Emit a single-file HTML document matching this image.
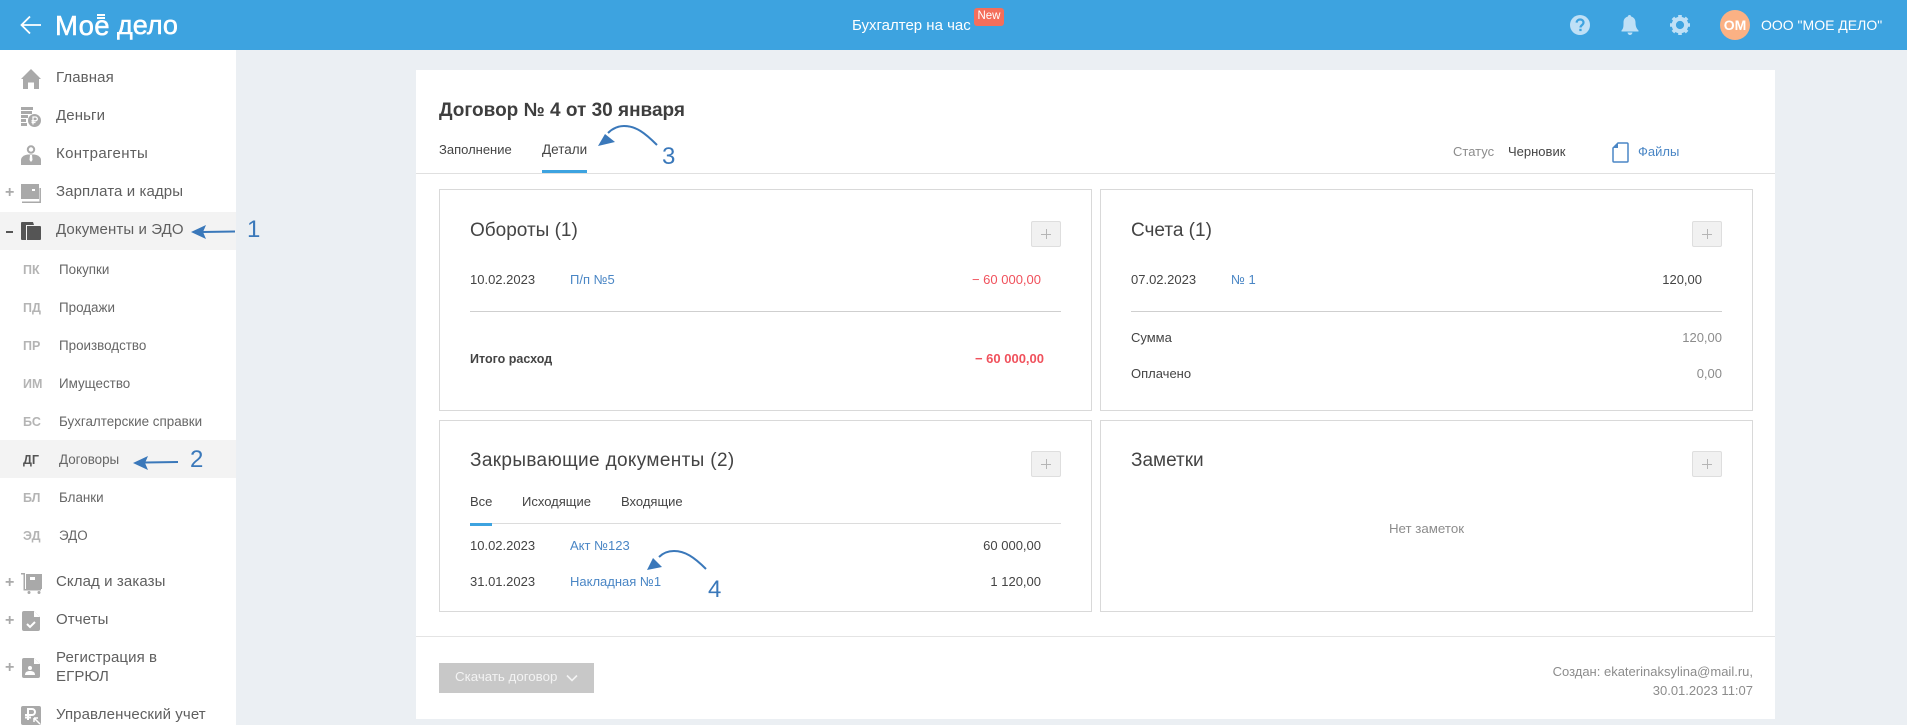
<!DOCTYPE html>
<html lang="ru"><head><meta charset="utf-8"><title>Договор</title>
<style>
*{box-sizing:border-box}
html,body{margin:0;padding:0;width:1907px;height:725px;overflow:hidden;background:#ebeff3;font-family:"Liberation Sans",Arial,sans-serif;color:#444}
.t{position:absolute;white-space:nowrap;line-height:20px;font-size:13px}
.r{text-align:right}
.a{position:absolute}
.m{font-size:15px;color:#5f5f5f;letter-spacing:.1px}
.s{font-size:13.4px;color:#666}
.k{font-size:12.5px;font-weight:bold;color:#b4b4b4}
.p{font-size:16px;color:#aaa;font-weight:bold}
.b{position:absolute;border:1px solid #d9d9d9;background:#fff}
.h{font-size:19px;color:#444;line-height:26px}
.l{color:#4a86c5}
.pb{position:absolute;width:30px;height:26px;background:#f1f1f1;border:1px solid #dedede;border-radius:2px}
.pb:before{content:"";position:absolute;left:9px;top:12px;width:10px;height:1px;background:#b5b5b5}
.pb:after{content:"";position:absolute;left:14px;top:7px;width:1px;height:10px;background:#b5b5b5}
.ln{position:absolute;height:1px;background:#cfcfcf}
.d{font-size:24px;line-height:30px;color:#3a78ba}
</style></head><body>

<div class="a" style="left:0;top:0;width:1907px;height:50px;background:#3da3e0"></div>
<svg class="a" style="left:20px;top:14px" width="22" height="22" viewBox="0 0 22 22" fill="none" stroke="#fff" stroke-width="1.800"><path d="M21 11H1.500M10 2.500L1.500 11l8.500 8.500"/></svg>
<div class="t" style="left:55px;top:10px;font-size:27.500px;line-height:32px;color:#fff;-webkit-text-stroke:.5px #fff;letter-spacing:.4px">Мое</div>
<div class="a" style="left:97px;top:14px;width:8px;height:2px;background:#fff"></div>
<div class="a" style="left:97px;top:17px;width:8px;height:2px;background:#fff"></div>
<div class="t" style="left:117px;top:9px;font-size:27px;line-height:32px;color:#fff;-webkit-text-stroke:.5px #fff;letter-spacing:0">дело</div>
<div class="t" style="left:852px;top:16px;font-size:15px;color:#fff">Бухгалтер на час</div>
<div class="a" style="left:974px;top:8px;width:30px;height:18px;background:#f46e5b;border-radius:3px;color:#fff;font-size:11.5px;line-height:17px;text-align:center">New</div>
<svg class="a" style="left:1570px;top:15px" width="20" height="20" viewBox="0 0 20 20"><circle cx="10" cy="10" r="10" fill="#bfe0f6"/><path d="M6.600 7.600C6.800 5.600 8.200 4.500 10.100 4.500c2 0 3.400 1.200 3.400 3 0 2.600-3 2.600-3 5" fill="none" stroke="#3da3e0" stroke-width="2.200"/><rect x="9.300" y="13.800" width="2.300" height="2.300" fill="#3da3e0"/></svg>
<svg class="a" style="left:1621px;top:14px" width="18" height="22" viewBox="0 0 18 22" fill="#bfe0f6"><path d="M9 1c1 0 1.600.7 1.600 1.500C13.500 3.300 15 5.500 15 8.500c0 4 1 6 3 8v1H1v-1c2-2 2-4 2-8 0-3 1.500-5.200 4.400-6C7.400 1.700 8 1 9 1z" transform="translate(-.5)"/><path d="M6.500 18.500h5c-.3 1.600-1.300 2.500-2.500 2.500s-2.200-.9-2.500-2.500z"/></svg>
<svg class="a" style="left:1670px;top:15px" width="20" height="20" viewBox="0 0 20 20"><circle cx="10" cy="10" r="6.200" fill="none" stroke="#bfe0f6" stroke-width="4.200"/><g stroke="#bfe0f6" stroke-width="3.600"><path d="M10 0v4M10 16v4M0 10h4M16 10h4M2.900 2.900l2.800 2.800M14.300 14.300l2.800 2.800M17.100 2.900l-2.800 2.800M5.700 14.300l-2.800 2.800"/></g></svg>
<div class="a" style="left:1720px;top:10px;width:30px;height:30px;border-radius:50%;background:#fbb184;color:#fff;font-weight:bold;font-size:14px;line-height:30px;text-align:center">ОМ</div>
<div class="t" style="left:1761px;top:15px;font-size:14px;color:#fff">ООО "МОЕ ДЕЛО"</div>

<div class="a" style="left:0;top:50px;width:236px;height:675px;background:#fff"></div>
<div class="a" style="left:0;top:212px;width:236px;height:38px;background:#f3f3f3"></div>
<div class="a" style="left:0;top:440px;width:236px;height:38px;background:#f3f3f3"></div>

<svg class="a" style="left:21px;top:69px" width="20" height="20" viewBox="0 0 20 20" fill="#a9a9a9"><path d="M10 0l10 10h-2v10h-5v-6.500H7V20H2V10H0z"/></svg>
<svg class="a" style="left:21px;top:107px" width="20" height="20" viewBox="0 0 20 20" fill="#a9a9a9"><path d="M0 0h12v3H0zM0 4h11v3H0zM0 8h7v3H0zM0 12h5v3H0zM0 16h6v3H0z"/><circle cx="13.500" cy="13.500" r="6.500"/><path d="M12 17.500v-7.500h2.400a1.800 1.800 0 010 3.800H10.500M10.500 15.500h4" fill="none" stroke="#fff" stroke-width="1.300"/></svg>
<svg class="a" style="left:21px;top:145px" width="20" height="20" viewBox="0 0 20 20" fill="#a9a9a9"><circle cx="10" cy="4.500" r="3.200" fill="none" stroke="#a9a9a9" stroke-width="2"/><path d="M0 20v-5c0-3 3-5 7-5.500h6c4 .5 7 2.500 7 5.500v5z"/><path d="M9 10h2l.5 5-1.500 2-1.500-2z" fill="#fff"/></svg>
<div class="t p" style="left:5px;top:183px">+</div>
<svg class="a" style="left:21px;top:184px" width="20" height="19" viewBox="0 0 20 19"><path d="M0 0h18v15H0z" fill="#a9a9a9"/><rect x="11" y="5" width="3" height="2" fill="#fff"/><path d="M19.200 4v14.200H1" fill="none" stroke="#a9a9a9" stroke-width="1.500"/></svg>
<div class="a" style="left:6px;top:231px;width:7px;height:2px;background:#555"></div>
<svg class="a" style="left:21px;top:222px" width="20" height="18" viewBox="0 0 20 18" fill="#555"><path d="M1 0h11l1 3H5v15H1a1 1 0 01-1-1V1a1 1 0 011-1z"/><path d="M6 4h13a1 1 0 011 1v12a1 1 0 01-1 1H6z"/></svg>
<div class="t m" style="left:56px;top:68px">Главная</div>
<div class="t m" style="left:56px;top:106px">Деньги</div>
<div class="t m" style="left:56px;top:144px;letter-spacing:.35px">Контрагенты</div>
<div class="t m" style="left:56px;top:182px">Зарплата и кадры</div>
<div class="t m" style="left:56px;top:220px">Документы и ЭДО</div>

<div class="t k" style="left:23px;top:260px">ПК</div><div class="t s" style="left:59px;top:260px">Покупки</div>
<div class="t k" style="left:23px;top:298px">ПД</div><div class="t s" style="left:59px;top:298px">Продажи</div>
<div class="t k" style="left:23px;top:336px">ПР</div><div class="t s" style="left:59px;top:336px">Производство</div>
<div class="t k" style="left:23px;top:374px">ИМ</div><div class="t s" style="left:59px;top:374px">Имущество</div>
<div class="t k" style="left:23px;top:412px">БС</div><div class="t s" style="left:59px;top:412px">Бухгалтерские справки</div>
<div class="t k" style="left:23px;top:450px;color:#555">ДГ</div><div class="t s" style="left:59px;top:450px">Договоры</div>
<div class="t k" style="left:23px;top:488px">БЛ</div><div class="t s" style="left:59px;top:488px">Бланки</div>
<div class="t k" style="left:23px;top:526px">ЭД</div><div class="t s" style="left:59px;top:526px">ЭДО</div>

<div class="t p" style="left:5px;top:573px">+</div>
<svg class="a" style="left:21px;top:573px" width="21" height="21" viewBox="0 0 21 21" fill="#a9a9a9"><path d="M0 0h4v16h16v1.500H2.500V1.500H0z"/><path d="M5 1h16v15H5z"/><rect x="9" y="4" width="5" height="3" fill="#fff"/><circle cx="8" cy="19.500" r="1.500"/><circle cx="18" cy="19.500" r="1.500"/></svg>
<div class="t p" style="left:5px;top:611px">+</div>
<svg class="a" style="left:22px;top:611px" width="18" height="20" viewBox="0 0 18 20"><path d="M2 0h10l6 6v12a2 2 0 01-2 2H2a2 2 0 01-2-2V2a2 2 0 012-2z" fill="#a9a9a9"/><path d="M12 0v6h6z" fill="#fff"/><path d="M5 13l3 3 5-5" fill="none" stroke="#fff" stroke-width="2"/></svg>
<div class="t p" style="left:5px;top:658px">+</div>
<svg class="a" style="left:22px;top:658px" width="18" height="20" viewBox="0 0 18 20"><path d="M2 0h10l6 6v12a2 2 0 01-2 2H2a2 2 0 01-2-2V2a2 2 0 012-2z" fill="#a9a9a9"/><path d="M12 0v6h6z" fill="#fff"/><circle cx="8" cy="10" r="2" fill="#fff"/><path d="M3 17c0-3 2-4 5-4s5 1 5 4z" fill="#fff"/></svg>
<svg class="a" style="left:21px;top:706px" width="20" height="19" viewBox="0 0 20 19"><rect width="20" height="19" rx="2" fill="#a9a9a9"/><path d="M7 14V3h4a3 3 0 010 6H4M4 11.500h6" fill="none" stroke="#fff" stroke-width="2"/><path d="M13 12h4M13 12v4M13 12l6 6" stroke="#fff" stroke-width="1.500" fill="none"/></svg>
<div class="t m" style="left:56px;top:572px">Склад и заказы</div>
<div class="t m" style="left:56px;top:610px">Отчеты</div>
<div class="t m" style="left:56px;top:648px">Регистрация в</div>
<div class="t m" style="left:56px;top:667px">ЕГРЮЛ</div>
<div class="t m" style="left:56px;top:705px">Управленческий учет</div>

<div class="a" style="left:416px;top:70px;width:1359px;height:649px;background:#fff"></div>
<div class="t" style="left:439px;top:100px;font-size:19px;line-height:22px;font-weight:bold;color:#3e3e3e">Договор № 4 от 30 января</div>
<div class="t" style="left:439px;top:140px;font-size:13px">Заполнение</div>
<div class="t" style="left:542px;top:140px;font-size:13.5px">Детали</div>
<div class="a" style="left:542px;top:170px;width:45px;height:3px;background:#3da3e0"></div>
<div class="a" style="left:416px;top:173px;width:1359px;height:1px;background:#e0e0e0"></div>
<div class="t" style="left:1453px;top:142px;color:#8c8c8c">Статус</div>
<div class="t" style="left:1508px;top:142px;color:#444">Черновик</div>
<svg class="a" style="left:1612px;top:142px" width="17" height="21" viewBox="0 0 17 21" fill="none"><path d="M6 1h9a1 1 0 011 1v17a1 1 0 01-1 1H2a1 1 0 01-1-1V6z" stroke="#4a86c5" stroke-width="1.500"/><path d="M6 1v5H1z" fill="#4a86c5"/></svg>
<div class="t l" style="left:1638px;top:142px">Файлы</div>

<div class="b" style="left:439px;top:189px;width:653px;height:222px"></div>
<div class="b" style="left:1100px;top:189px;width:653px;height:222px"></div>
<div class="b" style="left:439px;top:420px;width:653px;height:192px"></div>
<div class="b" style="left:1100px;top:420px;width:653px;height:192px"></div>

<div class="t h" style="left:470px;top:218px">Обороты (1)</div>
<div class="pb" style="left:1031px;top:221px"></div>
<div class="t" style="left:470px;top:270px">10.02.2023</div>
<div class="t l" style="left:570px;top:270px">П/п №5</div>
<div class="t r" style="left:841px;width:200px;top:270px;color:#f0515c">− 60 000,00</div>
<div class="ln" style="left:470px;top:311px;width:591px"></div>
<div class="t" style="left:470px;top:349px;font-size:12.5px;font-weight:bold">Итого расход</div>
<div class="t r" style="left:844px;width:200px;top:349px;color:#f0515c;font-weight:bold">− 60 000,00</div>

<div class="t h" style="left:1131px;top:218px">Счета (1)</div>
<div class="pb" style="left:1692px;top:221px"></div>
<div class="t" style="left:1131px;top:270px">07.02.2023</div>
<div class="t l" style="left:1231px;top:270px">№ 1</div>
<div class="t r" style="left:1502px;width:200px;top:270px">120,00</div>
<div class="ln" style="left:1131px;top:311px;width:591px"></div>
<div class="t" style="left:1131px;top:328px">Сумма</div>
<div class="t r" style="left:1522px;width:200px;top:328px;color:#8c8c8c">120,00</div>
<div class="t" style="left:1131px;top:364px">Оплачено</div>
<div class="t r" style="left:1522px;width:200px;top:364px;color:#8c8c8c">0,00</div>

<div class="t h" style="left:470px;top:448px;letter-spacing:.35px">Закрывающие документы (2)</div>
<div class="pb" style="left:1031px;top:451px"></div>
<div class="t" style="left:470px;top:492px">Все</div>
<div class="t" style="left:522px;top:492px">Исходящие</div>
<div class="t" style="left:621px;top:492px">Входящие</div>
<div class="ln" style="left:470px;top:523px;width:591px;height:1px;background:#dcdcdc"></div>
<div class="a" style="left:470px;top:523px;width:22px;height:3px;background:#3da3e0"></div>
<div class="t" style="left:470px;top:536px">10.02.2023</div>
<div class="t l" style="left:570px;top:536px">Акт №123</div>
<div class="t r" style="left:841px;width:200px;top:536px">60 000,00</div>
<div class="t" style="left:470px;top:572px">31.01.2023</div>
<div class="t l" style="left:570px;top:572px">Накладная №1</div>
<div class="t r" style="left:841px;width:200px;top:572px">1 120,00</div>

<div class="t h" style="left:1131px;top:448px">Заметки</div>
<div class="pb" style="left:1692px;top:451px"></div>
<div class="t" style="left:1100px;width:653px;text-align:center;top:519px;color:#8c8c8c;font-size:13.3px">Нет заметок</div>

<div class="a" style="left:416px;top:636px;width:1359px;height:1px;background:#e4e4e4"></div>
<div class="a" style="left:439px;top:663px;width:155px;height:30px;background:#c8c8c8"></div>
<div class="t" style="left:455px;top:667px;color:#f3f3f3;font-size:13.3px">Скачать договор</div>
<svg class="a" style="left:566px;top:674px" width="12" height="9" viewBox="0 0 12 9" fill="none" stroke="#f3f3f3" stroke-width="1.600"><path d="M1 1.500l5 5 5-5"/></svg>
<div class="t r" style="left:1453px;width:300px;top:662px;color:#8c8c8c">Создан: ekaterinaksylina@mail.ru,</div>
<div class="t r" style="left:1453px;width:300px;top:681px;color:#8c8c8c">30.01.2023 11:07</div>

<svg class="a" style="left:0;top:0" width="1907" height="725" fill="none" stroke="#3a78ba" stroke-width="2">
<path d="M235 231.500l-33 .5"/><path d="M191 232l15-7-3 7 3 7z" fill="#3a78ba" stroke="none"/>
<path d="M178 462l-33 .5"/><path d="M133 463l15-7-3 7 3 7z" fill="#3a78ba" stroke="none"/>
<path d="M657 145C645 133 636 126 624 126c-6 0-11 2-16 7"/><path d="M598 146l7-12 10 8z" fill="#3a78ba" stroke="none"/>
<path d="M706 569C694 557 685 551 674 551c-6 0-11 2-15 6"/><path d="M647 570l6-12 9 9z" fill="#3a78ba" stroke="none"/>
</svg>
<div class="t d" style="left:247px;top:215px">1</div>
<div class="t d" style="left:190px;top:445px">2</div>
<div class="t d" style="left:662px;top:142px">3</div>
<div class="t d" style="left:708px;top:575px">4</div>
</body></html>
